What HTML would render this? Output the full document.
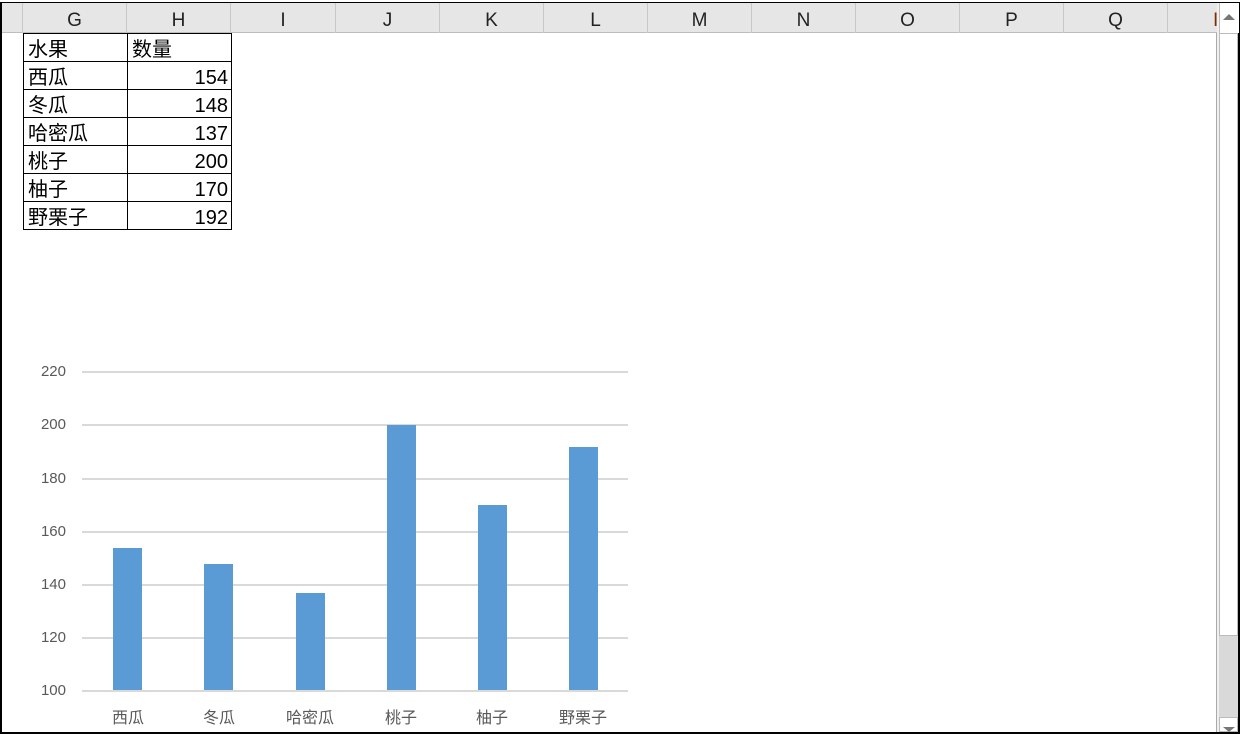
<!DOCTYPE html>
<html><head><meta charset="utf-8"><style>
body{margin:0;width:1240px;height:734px;overflow:hidden;background:#fff;position:relative;font-family:"Liberation Sans","Noto Sans CJK SC",sans-serif}
.a{position:absolute}
.hd{position:absolute;top:3px;height:30px;background:#e6e6e6;border-bottom:1px solid #bdbdbd;box-sizing:border-box}
.col{position:absolute;top:3px;height:30px;line-height:36px;text-align:center;font-size:19px;color:#222;border-right:1px solid #c8c8c8;box-sizing:border-box}
.cell{position:absolute;height:29px;box-sizing:border-box;border:1px solid #000;font-size:20px;line-height:33px;color:#000}
.g{position:absolute;left:82px;width:546px;height:2px;background:#d9d9d9}
.yl{position:absolute;left:28px;width:38px;text-align:right;font-size:15px;color:#595959}
.bar{position:absolute;width:29px;background:#5b9bd5}
.xl{position:absolute;width:90px;text-align:center;font-size:16px;color:#595959;top:704px}
</style></head><body>
<div class="a" style="left:0;top:2px;width:1240px;height:1px;background:#000"></div>
<div class="hd" style="left:2px;width:1215px"></div>
<div class="col" style="left:2px;width:21px"></div>
<div class="col" style="left:23px;width:104px">G</div>
<div class="col" style="left:127px;width:104px">H</div>
<div class="col" style="left:231px;width:105px">I</div>
<div class="col" style="left:336px;width:104px">J</div>
<div class="col" style="left:440px;width:104px">K</div>
<div class="col" style="left:544px;width:104px">L</div>
<div class="col" style="left:648px;width:104px">M</div>
<div class="col" style="left:752px;width:104px">N</div>
<div class="col" style="left:856px;width:104px">O</div>
<div class="col" style="left:960px;width:104px">P</div>
<div class="col" style="left:1064px;width:104px">Q</div>
<div class="col" style="left:1168px;width:49px;text-align:left;padding-left:45px;border:none;color:#7a3000">I</div>
<div class="a" style="left:0;top:2px;width:2px;height:732px;background:#000"></div>
<div class="a" style="left:0;top:732px;width:1240px;height:2px;background:#000"></div>
<div class="a" style="left:1238px;top:2px;width:2px;height:732px;background:#000"></div>
<div class="a" style="left:1216px;top:33px;width:1px;height:699px;background:#aaa"></div>
<div class="a" style="left:1217px;top:3px;width:21px;height:729px;background:#f0f0f0"></div>
<div class="a" style="left:1219px;top:3px;width:19px;height:30px;background:#fff;border-left:1px solid #bbb"></div>
<div class="a" style="left:1223px;top:14px;width:0;height:0;border-left:6px solid transparent;border-right:6px solid transparent;border-bottom:6px solid #777"></div>
<div class="a" style="left:1219px;top:33px;width:19px;height:603px;background:#fff;border:1px solid #bbb;box-sizing:border-box"></div>
<div class="a" style="left:1219px;top:636px;width:19px;height:81px;background:#d9d9d9"></div>
<div class="a" style="left:1219px;top:717px;width:19px;height:15px;background:#fff;border:1px solid #bbb;box-sizing:border-box"></div>
<div class="a" style="left:1223px;top:727px;width:0;height:0;border-left:6px solid transparent;border-right:6px solid transparent;border-top:5px solid #777"></div>
<div class="cell" style="left:23px;top:33px;width:105px;padding-left:4px">水果</div>
<div class="cell" style="left:127px;top:33px;width:105px;padding-left:4px">数量</div>
<div class="cell" style="left:23px;top:61px;width:105px;padding-left:4px">西瓜</div>
<div class="cell" style="left:127px;top:61px;width:105px;text-align:right;padding-right:3px">154</div>
<div class="cell" style="left:23px;top:89px;width:105px;padding-left:4px">冬瓜</div>
<div class="cell" style="left:127px;top:89px;width:105px;text-align:right;padding-right:3px">148</div>
<div class="cell" style="left:23px;top:117px;width:105px;padding-left:4px">哈密瓜</div>
<div class="cell" style="left:127px;top:117px;width:105px;text-align:right;padding-right:3px">137</div>
<div class="cell" style="left:23px;top:145px;width:105px;padding-left:4px">桃子</div>
<div class="cell" style="left:127px;top:145px;width:105px;text-align:right;padding-right:3px">200</div>
<div class="cell" style="left:23px;top:173px;width:105px;padding-left:4px">柚子</div>
<div class="cell" style="left:127px;top:173px;width:105px;text-align:right;padding-right:3px">170</div>
<div class="cell" style="left:23px;top:201px;width:105px;padding-left:4px">野栗子</div>
<div class="cell" style="left:127px;top:201px;width:105px;text-align:right;padding-right:3px">192</div>
<div class="g" style="top:371px"></div><div class="yl" style="top:363px">220</div>
<div class="g" style="top:424px"></div><div class="yl" style="top:416px">200</div>
<div class="g" style="top:478px"></div><div class="yl" style="top:470px">180</div>
<div class="g" style="top:531px"></div><div class="yl" style="top:523px">160</div>
<div class="g" style="top:584px"></div><div class="yl" style="top:576px">140</div>
<div class="g" style="top:637px"></div><div class="yl" style="top:629px">120</div>
<div class="g" style="top:690px"></div><div class="yl" style="top:682px">100</div>
<div class="bar" style="left:113px;top:548px;height:142px"></div>
<div class="bar" style="left:204px;top:564px;height:126px"></div>
<div class="bar" style="left:296px;top:593px;height:97px"></div>
<div class="bar" style="left:387px;top:425px;height:265px"></div>
<div class="bar" style="left:478px;top:505px;height:185px"></div>
<div class="bar" style="left:569px;top:447px;height:243px"></div>
<div class="xl" style="left:83px">西瓜</div>
<div class="xl" style="left:174px">冬瓜</div>
<div class="xl" style="left:265px">哈密瓜</div>
<div class="xl" style="left:356px">桃子</div>
<div class="xl" style="left:447px">柚子</div>
<div class="xl" style="left:538px">野栗子</div>
</body></html>
